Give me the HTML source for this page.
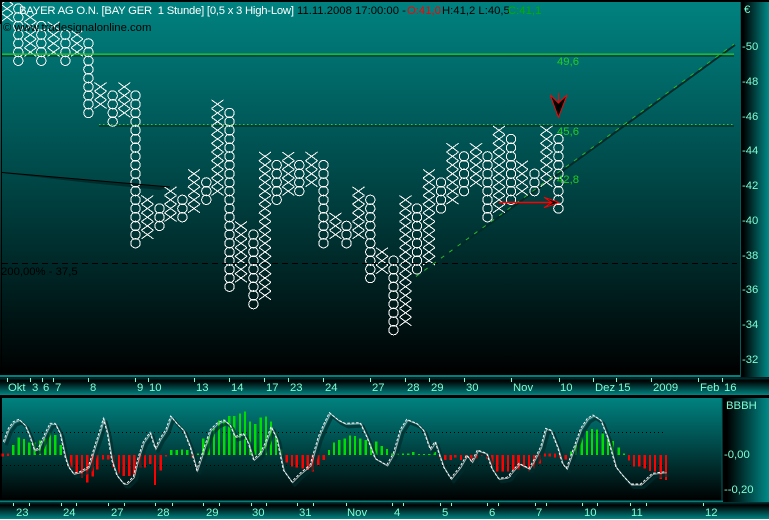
<!DOCTYPE html>
<html><head><meta charset="utf-8"><style>
html,body{margin:0;padding:0;background:#000;width:769px;height:520px;overflow:hidden}
svg{display:block;position:absolute;left:0;top:0}
text{font:11.3px "Liberation Sans",sans-serif;white-space:pre}
.a{fill:#7fffd4}
.g{fill:#22cc22}
.O{marker:url(#mo);fill:none;stroke:none}
.X{marker:url(#mx);fill:none;stroke:none}
</style></head><body>
<svg width="769" height="520" viewBox="0 0 769 520" xmlns="http://www.w3.org/2000/svg">
<linearGradient id="m" x1="0" y1="0" x2="0" y2="1"><stop offset="0" stop-color="#008280"/><stop offset=".45" stop-color="#004a4a"/><stop offset="1" stop-color="#000"/></linearGradient>
<linearGradient id="r" x1="0" y1="0" x2="1" y2="0"><stop offset=".1" stop-color="#000"/><stop offset="1" stop-color="#008a88"/></linearGradient>
<linearGradient id="s" x1="0" y1="0" x2="0" y2="1"><stop offset="0" stop-color="#003c3c"/><stop offset=".18" stop-color="#000"/><stop offset="1" stop-color="#008482"/></linearGradient>
<marker id="mo" markerUnits="userSpaceOnUse" markerWidth="14" markerHeight="14" refX="7" refY="7"><circle cx="7" cy="7" r="4.7" fill="none" stroke="#fff" stroke-width="1" shape-rendering="crispEdges"/></marker>
<marker id="mx" markerUnits="userSpaceOnUse" markerWidth="14" markerHeight="14" refX="7" refY="7"><path d="M1 2.700L13 11.300M13 2.700L1 11.300" fill="none" stroke="#fff" stroke-width="1" shape-rendering="crispEdges"/></marker>

<rect x="2" y="2" width="738" height="373" fill="url(#m)"/>
<rect x="0" y="2" width="1" height="373" fill="url(#m)"/>
<rect x="740" y="2" width="29" height="375" fill="url(#r)"/>
<rect x="0" y="375" width="741" height="2" fill="#007f7d"/>
<rect x="740" y="2" width="1" height="375" fill="#025c5c"/>
<rect x="0" y="377.500" width="769" height="17.500" fill="url(#s)"/>
<rect x="2" y="398" width="720" height="102.500" fill="url(#m)"/>
<rect x="722" y="398" width="47" height="104" fill="url(#r)"/>
<rect x="0" y="500.500" width="723" height="2" fill="#007f7d"/>
<rect x="721.500" y="398" width="1" height="103" fill="#025c5c"/>
<rect x="0" y="502" width="769" height="17" fill="url(#s)"/>
<rect x="0" y="519" width="769" height="1" fill="#fff"/>

<!-- shadows of lines -->
<rect x="2" y="55" width="732" height="2" fill="#004a4a"/>
<rect x="99" y="125" width="635" height="2" fill="#003c3c"/>
<path d="M2 173L170 187L160 190L90 183Z" fill="#002c2c"/>
<path d="M417 277L735 45" stroke="#012a2a" stroke-width="2" fill="none"/>

<!-- point & figure columns -->
<path class="X" d="M7 -.05v8.69v8.69"/>
<path class="O" d="M18.3 8.64v8.69v8.69v8.69v8.69v8.69v8.69"/>
<path class="X" d="M30.3 17.33v8.69v8.69v8.69v8.69"/>
<path class="O" d="M41.3 26.02v8.69v8.69v8.69v8.69"/>
<path class="X" d="M53.6 26.02v8.69v8.69v8.69"/>
<path class="O" d="M65.4 34.71v8.69v8.69v8.69"/>
<path class="X" d="M77 34.71v8.69v8.69"/>
<path class="O" d="M88.4 43.4v8.69v8.69v8.69v8.69v8.69v8.69v8.69v8.69"/>
<path class="X" d="M100.500 86.85v8.69v8.69"/>
<path class="O" d="M112.700 95.54v8.69v8.69v8.69"/>
<path class="X" d="M124.300 86.85v8.69v8.69v8.69"/>
<path class="O" d="M135.500 95.54v8.69v8.69v8.69v8.69v8.69v8.69v8.69v8.69v8.69v8.69v8.69v8.69v8.69v8.69v8.69v8.69v8.69"/>
<path class="X" d="M147.400 199.82v8.69v8.69v8.69v8.69"/>
<path class="O" d="M159.500 208.51v8.69v8.69"/>
<path class="X" d="M170.500 191.13v8.69v8.69v8.69"/>
<path class="O" d="M182.400 199.82v8.69v8.69"/>
<path class="X" d="M194 173.75v8.69v8.69v8.69v8.69"/>
<path class="O" d="M206.300 182.44v8.69v8.69"/>
<path class="X" d="M217.500 104.23v8.69v8.69v8.69v8.69v8.69v8.69v8.69v8.69v8.69v8.69"/>
<path class="O" d="M229.500 112.92v8.69v8.69v8.69v8.69v8.69v8.69v8.69v8.69v8.69v8.69v8.69v8.69v8.69v8.69v8.69v8.69v8.69v8.69v8.69v8.69"/>
<path class="X" d="M241 225.89v8.69v8.69v8.69v8.69v8.69v8.69"/>
<path class="O" d="M253.400 234.58v8.69v8.69v8.69v8.69v8.69v8.69v8.69v8.69"/>
<path class="X" d="M265 156.37v8.69v8.69v8.69v8.69v8.69v8.69v8.69v8.69v8.69v8.69v8.69v8.69v8.69v8.69v8.69v8.69"/>
<path class="O" d="M276.700 165.06v8.69v8.69v8.69v8.69"/>
<path class="X" d="M288.300 156.37v8.69v8.69v8.69v8.69"/>
<path class="O" d="M299.300 165.06v8.69v8.69v8.69"/>
<path class="X" d="M311.500 156.37v8.69v8.69v8.69"/>
<path class="O" d="M323.500 165.06v8.69v8.69v8.69v8.69v8.69v8.69v8.69v8.69v8.69"/>
<path class="X" d="M335.500 217.2v8.69v8.69"/>
<path class="O" d="M346.500 225.89v8.69v8.69"/>
<path class="X" d="M358.500 191.13v8.69v8.69v8.69v8.69v8.69"/>
<path class="O" d="M370.300 199.82v8.69v8.69v8.69v8.69v8.69v8.69v8.69v8.69v8.69"/>
<path class="X" d="M382 251.96v8.69v8.69"/>
<path class="O" d="M393.500 260.65v8.69v8.69v8.69v8.69v8.69v8.69v8.69v8.69"/>
<path class="X" d="M405.500 199.82v8.69v8.69v8.69v8.69v8.69v8.69v8.69v8.69v8.69v8.69v8.69v8.69v8.69v8.69"/>
<path class="O" d="M417 208.51v8.69v8.69v8.69v8.69v8.69v8.69v8.69"/>
<path class="X" d="M429 173.75v8.69v8.69v8.69v8.69v8.69v8.69v8.69v8.69v8.69v8.69"/>
<path class="O" d="M441 182.44v8.69v8.69v8.69"/>
<path class="X" d="M452.500 147.68v8.69v8.69v8.69v8.69v8.69v8.69"/>
<path class="O" d="M464 156.37v8.69v8.69v8.69v8.69"/>
<path class="X" d="M476 147.68v8.69v8.69v8.69v8.69"/>
<path class="O" d="M487.500 156.37v8.69v8.69v8.69v8.69v8.69v8.69v8.69"/>
<path class="X" d="M499 130.3v8.69v8.69v8.69v8.69v8.69v8.69v8.69v8.69v8.69"/>
<path class="O" d="M511 139v8.69v8.69v8.69v8.69v8.69v8.69v8.69"/>
<path class="X" d="M522 165.06v8.69v8.69v8.69"/>
<path class="O" d="M534.500 173.75v8.69v8.69"/>
<path class="X" d="M546.500 130.3v8.69v8.69v8.69v8.69v8.69v8.69"/>
<path class="O" d="M558.400 139v8.69v8.69v8.69v8.69v8.69v8.69v8.69v8.69"/>
<rect x="0" y="0" width="769" height="2" fill="#000"/>
<rect x="0" y="0" width="2" height="24" fill="#000"/>

<!-- lines -->
<rect x="2" y="53.500" width="732" height="1.300" fill="#22cc22"/>
<path d="M99 124.500H734" stroke="#33cc22" stroke-width="1" stroke-dasharray="1.500 2.500" fill="none"/>
<path d="M2 172.500L170 187" stroke="#000" stroke-width="1" fill="none"/>
<path d="M2 263.500H737" stroke="#000" stroke-width="1" stroke-dasharray="6 4" fill="none"/>
<path d="M416 276.500L734 44" stroke="#2cb52c" stroke-width="1" stroke-dasharray="4 6.300" fill="none"/>

<!-- arrows -->
<path d="M558.400 93V103" stroke="#f00" fill="none"/>
<path d="M550.300 95L558.400 103L567 95L558.400 117.300Z" fill="#000" stroke="#f00" stroke-width="1"/>
<path d="M499 202.500H552" stroke="#f00" stroke-width="1.500" fill="none"/>
<path d="M544 197.300L552 202.500L544 207.700L559 202.500Z" fill="#000" stroke="#f00" stroke-width="1"/>

<!-- header text -->
<text x="19" y="14" fill="#fff" textLength="275">BAYER AG O.N. [BAY GER  1 Stunde] [0,5 x 3 High-Low]</text>
<text y="14"><tspan x="297" fill="#000">11.11.2008 17:00:00 - </tspan><tspan x="407" fill="#f00">O:41,0</tspan><tspan x="442" fill="#000">H:41,2 L:40,5 </tspan><tspan x="508" fill="#00b000">C:41,1</tspan></text>
<text x="3" y="31" fill="#000">© www.tradesignalonline.com</text>
<text x="1" y="275" fill="#000">200,00% - 37,5</text>
<text class="g" x="557" y="65">49,6</text>
<text class="g" x="557" y="135">45,6</text>
<text class="g" x="557" y="183">42,8</text>

<!-- right axis -->
<text class="a" x="744" y="13">€</text>
<text class="a" x="742" y="50">-50</text>
<text class="a" x="742" y="85">-48</text>
<text class="a" x="742" y="120">-46</text>
<text class="a" x="742" y="154">-44</text>
<text class="a" x="742" y="189">-42</text>
<text class="a" x="742" y="224">-40</text>
<text class="a" x="742" y="259">-38</text>
<text class="a" x="742" y="293">-36</text>
<text class="a" x="742" y="328">-34</text>
<text class="a" x="742" y="363">-32</text>

<!-- main axis -->
<path stroke="#7fffd4" stroke-width="1" fill="none" d="M7.500 378v4M30.500 378v4M42.500 378v4M53.500 378v4M88.500 378v4M135.500 378v4M148.500 378v4M194.500 378v4M229.500 378v4M264.500 378v4M288.500 378v4M323.500 378v4M370.500 378v4M405.500 378v4M429.500 378v4M464.500 378v4M511.500 378v4M559.500 378v4M593.500 378v4M616.500 378v4M651.500 378v4M698.500 378v4M722.500 378v4"/>
<text class="a" x="8" y="391">Okt</text>
<text class="a" x="32" y="391">3</text>
<text class="a" x="43" y="391">6</text>
<text class="a" x="55" y="391">7</text>
<text class="a" x="90" y="391">8</text>
<text class="a" x="137" y="391">9</text>
<text class="a" x="149" y="391">10</text>
<text class="a" x="196" y="391">13</text>
<text class="a" x="231" y="391">14</text>
<text class="a" x="266" y="391">17</text>
<text class="a" x="290" y="391">23</text>
<text class="a" x="325" y="391">24</text>
<text class="a" x="372" y="391">27</text>
<text class="a" x="407" y="391">28</text>
<text class="a" x="431" y="391">29</text>
<text class="a" x="466" y="391">30</text>
<text class="a" x="513" y="391">Nov</text>
<text class="a" x="560" y="391">10</text>
<text class="a" x="595" y="391">Dez</text>
<text class="a" x="618" y="391">15</text>
<text class="a" x="653" y="391">2009</text>
<text class="a" x="700" y="391">Feb</text>
<text class="a" x="724" y="391">16</text>

<!-- lower panel dotted -->
<path d="M2 432.500H664M2 465.500H664" stroke="#000" stroke-width="1" stroke-dasharray="1 3" fill="none"/>

<!-- bars -->
<g transform="translate(0,370) scale(.33333)" stroke-width="7" fill="none" shape-rendering="crispEdges">
<path stroke="#f00" d="M8 251V260M24 251V258M198 255V262M214 255V292M230 255V310M246 255V322M262 255V338M278 255V320M292 255V298M309 255V268M325 255V268M341 255V292M357 255V310M371 255V318M388 255V318M403 255V315M421 255V292M435 255V292M451 255V282M465 255V345M482 255V302M498 255V260M578 255V262"/>
<path stroke="#0d0" d="M40 255V225M56 255V202M72 255V207M88 255V218M104 255V218M120 255V212M136 255V205M150 255V188M166 255V195M182 255V225M514 255V240M530 255V240M546 255V238M562 255V240M594 255V250M610 255V205M626 255V200M642 255V175M657 255V152M673 255V148M688 255V138M703 255V138M720 255V130M735 255V125M750 255V155M766 255V162"/>
</g>
<g transform="translate(260,370) scale(.33333)" stroke-width="7" fill="none" shape-rendering="crispEdges">
<path stroke="#0d0" d="M2 255V143M18 255V140M33 255V155M48 255V188M64 255V238M207 255V240M222 255V218M238 255V210M254 255V205M270 255V197M285 255V198M301 255V205M317 255V210M333 255V220M349 255V215M365 255V228M381 255V237M397 255V250M413 255V250M429 255V250M445 255V250M460 255V246M477 255V252M492 255V252M508 255V252M524 255V246"/>
<path stroke="#f00" d="M80 255V278M96 255V290M110 255V293M128 255V295M143 255V300M158 255V305M175 255V285M191 255V270M540 255V262M556 255V270M572 255V270M586 255V262M603 255V270M618 255V265M634 255V275M650 255V265M666 255V258M682 255V265M697 255V290M712 255V305M728 255V305M744 255V305M760 255V300M776 255V300"/>
</g>
<g transform="translate(509,370) scale(.33333)" stroke-width="7" fill="none" shape-rendering="crispEdges">
<path stroke="#f00" d="M12 255V295M28 255V290M45 255V295M60 255V305M75 255V295M92 255V280M108 251V260M122 251V260M138 251V262M153 251V262M170 255V268M360 255V272M375 255V290M391 255V290M407 255V295M423 255V303M438 255V305M455 255V327M471 255V330"/>
<path stroke="#0d0" d="M186 255V245M201 255V225M218 255V203M234 255V183M249 255V177M264 255V178M281 255V190M297 255V200M312 255V213M329 255V232M345 255V250"/>
</g>

<!-- curves: shadow -->
<g fill="none" stroke="#012c2c" stroke-width="9" stroke-opacity=".7" stroke-linejoin="round">
<path transform="translate(3,373.500) scale(.33333)" d="M10 215L25 175L40 155L57 148L75 165L88 195L103 240L115 235L135 190L150 160L165 160L180 190L195 260L205 290L220 310L240 305L265 290L285 225L300 180L310 145L322 190L335 270L350 315L370 340L380 340L400 320L415 260L430 215L450 187L465 235L480 205L497 180L512 138L530 160L550 180L570 230L590 300L610 240L630 180L650 160L672 150L690 165L705 200L730 190L745 220L760 268L780 250"/>
<path transform="translate(263,373.500) scale(.33333)" d="M0 250L15 220L33 170L50 205L70 300L95 335L120 310L150 285L175 200L190 165L208 128L235 150L255 160L300 158L320 200L345 265L380 285L400 250L420 180L440 148L470 160L490 180L510 237L525 215L550 290L572 325L600 290L620 255L635 275L652 240L680 250L695 295L715 325L740 322L750 315"/>
<path transform="translate(512,373.500) scale(.33333)" d="M0 315L30 280L60 295L80 260L95 230L110 175L125 180L145 230L160 280L172 295L190 245L215 175L235 145L252 135L275 150L295 200L320 290L340 315L365 342L395 342L430 310L470 305"/>
</g>
<!-- curves: grey slow -->
<g fill="none" stroke="#aab8b8" stroke-width="2.800">
<path transform="translate(1,371) scale(.33333)" d="M10 215L25 175L40 155L57 148L75 165L88 195L103 240L115 235L135 190L150 160L165 160L180 190L195 260L205 290L220 310L240 305L265 290L285 225L300 180L310 145L322 190L335 270L350 315L370 340L380 340L400 320L415 260L430 215L450 187L465 235L480 205L497 180L512 138L530 160L550 180L570 230L590 300L610 240L630 180L650 160L672 150L690 165L705 200L730 190L745 220L760 268L780 250"/>
<path transform="translate(261,371) scale(.33333)" d="M0 250L15 220L33 170L50 205L70 300L95 335L120 310L150 285L175 200L190 165L208 128L235 150L255 160L300 158L320 200L345 265L380 285L400 250L420 180L440 148L470 160L490 180L510 237L525 215L550 290L572 325L600 290L620 255L635 275L652 240L680 250L695 295L715 325L740 322L750 315"/>
<path transform="translate(510,371) scale(.33333)" d="M0 315L30 280L60 295L80 260L95 230L110 175L125 180L145 230L160 280L172 295L190 245L215 175L235 145L252 135L275 150L295 200L320 290L340 315L365 342L395 342L430 310L470 305"/>
</g>
<!-- curves: white fast -->
<g fill="none" stroke="#fff" stroke-width="2.800" stroke-dasharray="8 5">
<path transform="translate(0,370) scale(.33333)" d="M10 215L25 175L40 155L57 148L75 165L88 195L103 240L115 235L135 190L150 160L165 160L180 190L195 260L205 290L220 310L240 305L265 290L285 225L300 180L310 145L322 190L335 270L350 315L370 340L380 340L400 320L415 260L430 215L450 187L465 235L480 205L497 180L512 138L530 160L550 180L570 230L590 300L610 240L630 180L650 160L672 150L690 165L705 200L730 190L745 220L760 268L780 250"/>
<path transform="translate(260,370) scale(.33333)" d="M0 250L15 220L33 170L50 205L70 300L95 335L120 310L150 285L175 200L190 165L208 128L235 150L255 160L300 158L320 200L345 265L380 285L400 250L420 180L440 148L470 160L490 180L510 237L525 215L550 290L572 325L600 290L620 255L635 275L652 240L680 250L695 295L715 325L740 322L750 315"/>
<path transform="translate(509,370) scale(.33333)" d="M0 315L30 280L60 295L80 260L95 230L110 175L125 180L145 230L160 280L172 295L190 245L215 175L235 145L252 135L275 150L295 200L320 290L340 315L365 342L395 342L430 310L470 305"/>
</g>

<!-- lower right axis -->
<text class="a" x="726" y="409">BBBH</text>
<text class="a" x="724" y="458">-0,00</text>
<text class="a" x="724" y="493">--0,20</text>

<!-- lower axis -->
<path stroke="#7fffd4" stroke-width="1" fill="none" d="M13.500 503v3M29.500 503v3M61.500 503v3M76.500 503v3M108.500 503v3M124.500 503v3M155.500 503v3M172.500 503v3M203.500 503v3M219.500 503v3M251.500 503v3M266.500 503v3M297.500 503v3M313.500 503v3M346.500 503v3M392.500 503v3M403.500 503v3M440.500 503v3M451.500 503v3M487.500 503v3M498.500 503v3M535.500 503v3M546.500 503v3M582.500 503v3M597.500 503v3M630.500 503v3M646.500 503v3M703.500 503v3"/>
<text class="a" x="16" y="516">23</text>
<text class="a" x="63" y="516">24</text>
<text class="a" x="111" y="516">27</text>
<text class="a" x="157" y="516">28</text>
<text class="a" x="206" y="516">29</text>
<text class="a" x="252" y="516">30</text>
<text class="a" x="299" y="516">31</text>
<text class="a" x="347" y="516">Nov</text>
<text class="a" x="394" y="516">4</text>
<text class="a" x="442" y="516">5</text>
<text class="a" x="489" y="516">6</text>
<text class="a" x="536" y="516">7</text>
<text class="a" x="584" y="516">10</text>
<text class="a" x="631" y="516">11</text>
<text class="a" x="705" y="516">12</text>
</svg>
</body></html>
